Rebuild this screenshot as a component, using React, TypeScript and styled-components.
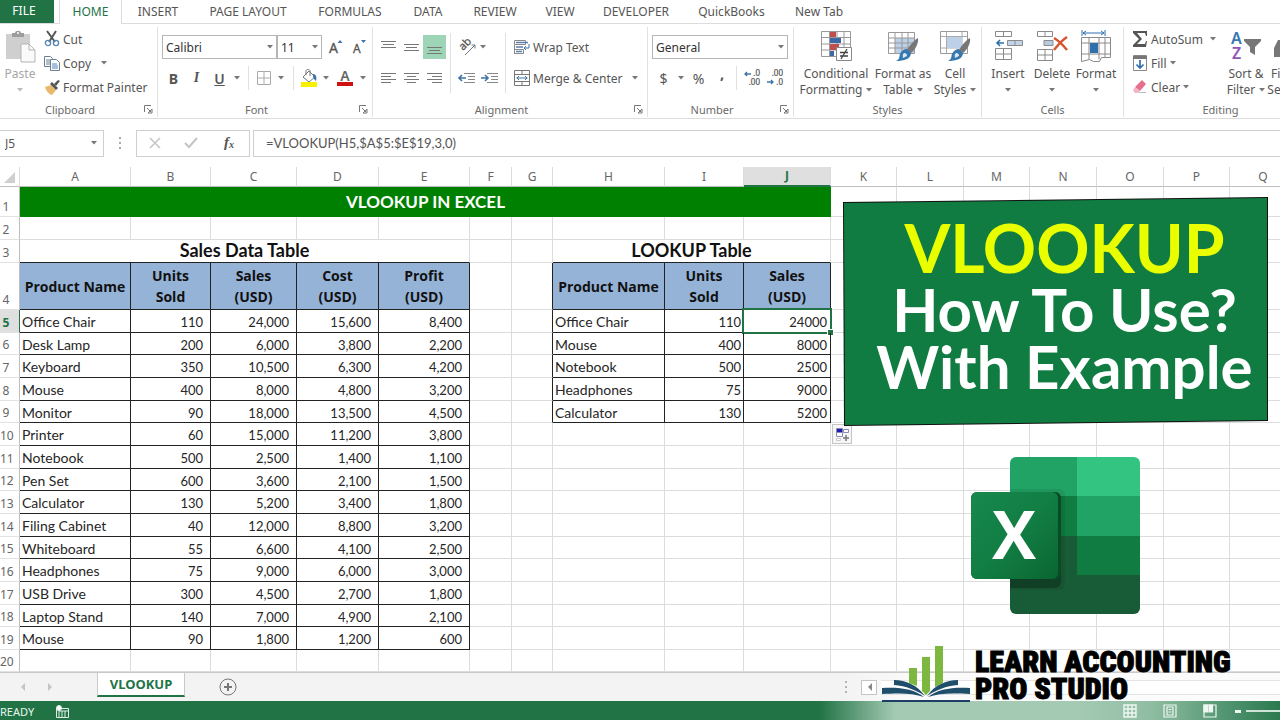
import React from 'react';
import styled, { createGlobalStyle } from 'styled-components';

const UI_FONT = '"Noto Sans", "Open Sans", sans-serif';
const CELL_FONT = 'Lato, "Open Sans", sans-serif';
const GREEN = '#217346';
const INK = '#555';

const Global = createGlobalStyle`
  * { box-sizing: border-box; }
  body { margin: 0; background: #fff; font-family: ${UI_FONT}; font-size: 12px; color: ${INK}; overflow: hidden; }
  button, input, select { font: inherit; color: inherit; }
  svg { display: block; flex: none; overflow: visible; }
`;

const Page = styled.div`
  position: relative;
  display: flex;
  flex-direction: column;
  min-height: 100vh;
  overflow: hidden;
`;

/* ---------- ribbon tabs ---------- */
const TabStrip = styled.nav`
  display: flex;
  height: 24px;
  border-bottom: 1px solid #dcdcdc;
`;
const FileTab = styled.button`
  width: 54px;
  height: 23px;
  padding: 0 6px 2px 0;
  border: 0;
  background: ${GREEN};
  color: #fff;
  margin-right: 5px;
`;
const RibbonTab = styled.button<{ $w: number; $active?: boolean }>`
  width: ${p => p.$w}px;
  height: 24px;
  padding: 0 0 2px;
  white-space: nowrap;
  border: solid #dcdcdc;
  border-width: ${p => (p.$active ? '0 1px' : '0')};
  background: ${p => (p.$active ? '#fff' : 'transparent')};
  color: ${p => (p.$active ? GREEN : INK)};
`;

/* ---------- ribbon body ---------- */
const Ribbon = styled.div`
  display: flex;
  height: 95px;
  border-bottom: 1px solid #dcdcdc;
  overflow: hidden;
`;
const Group = styled.section<{ $w: number }>`
  flex: none;
  display: flex;
  flex-direction: column;
  width: ${p => p.$w}px;
  padding-left: 4px;
  margin: 3px 0 1px;
  border-right: 1px solid #e2e2e2;
`;
const GroupBody = styled.div`
  flex: 1;
  display: flex;
  align-items: flex-start;
`;
const GroupFoot = styled.footer`
  display: flex;
  align-items: center;
  height: 16px;
  padding-right: 4px;
  font-size: 11px;
  color: #6a6a6a;
`;
const FootLabel = styled.span<{ $pad: number }>`
  flex: 1;
  padding-right: ${p => p.$pad}px;
  text-align: center;
`;
const Bare = styled.button`
  display: flex;
  padding: 0;
  border: 0;
  background: none;
`;
const Stack = styled.div`
  display: flex;
  flex-direction: column;
  gap: 7px;
  padding-top: 8px;
`;
const Line = styled.div`
  display: flex;
  align-items: center;
  height: 24px;
`;
const Indented = styled(Line)`
  padding-left: 4px;
`;
const Tool = styled.button<{ $w: number; $on?: boolean }>`
  display: flex;
  align-items: center;
  justify-content: center;
  width: ${p => p.$w}px;
  height: 24px;
  padding: 0;
  border: 0;
  background: ${p => (p.$on ? '#9fd5b7' : 'none')};
  font-size: 14px;
`;
const TextTool = styled.button`
  display: flex;
  align-items: center;
  gap: 3px;
  height: 24px;
  padding: 0;
  border: 0;
  background: none;
  white-space: nowrap;
`;
const Italic = styled.i`
  font-family: "Liberation Serif", serif;
  font-weight: bold;
`;
const Under = styled.u`
  font-weight: 600;
`;
const EditList = styled.div`
  width: 96px;
  padding-left: 4px;
`;
const ClipList = styled.div`
  padding-left: 8px;
`;
const BigTool = styled.button<{ $w: number; $dim?: boolean }>`
  display: flex;
  flex-direction: column;
  align-items: center;
  width: ${p => p.$w}px;
  padding: 3px 0 0;
  border: 0;
  background: none;
  line-height: 16px;
  white-space: nowrap;
  color: ${p => (p.$dim ? '#a6a6a6' : INK)};
`;
const BigLabel = styled.span`
  display: flex;
  flex-direction: column;
  align-items: center;
  margin-top: 4px;
`;
const LabelRow = styled.span`
  display: flex;
  align-items: center;
  gap: 4px;
  min-height: 16px;
`;
const Divider = styled.span<{ $h: number; $m: number }>`
  width: 1px;
  height: ${p => p.$h}px;
  margin: 0 ${p => p.$m}px;
  background: #e0e0e0;
`;
const DividerTall = styled(Divider)`
  margin-top: 6px;
`;
const PickWrap = styled.label<{ $w: number }>`
  position: relative;
  display: block;
  width: ${p => p.$w}px;
  height: 24px;
`;
const Pick = styled.select`
  appearance: none;
  width: 100%;
  height: 24px;
  padding: 0 4px 0 3px;
  border: 1px solid #b5b5b5;
  border-radius: 0;
  background: #fff;
  color: #333;
`;
const PickArrow = styled.span`
  position: absolute;
  right: 4px;
  top: 10px;
  pointer-events: none;
`;

/* ---------- formula bar ---------- */
const FormulaBar = styled.div`
  display: flex;
  align-items: center;
  height: 48px;
`;
const NameBox = styled.div`
  display: flex;
  align-items: center;
  width: 104px;
  height: 27px;
  padding-right: 6px;
  border: 1px solid #cfcfcf;
  border-left: 0;
`;
const NameInput = styled.input`
  flex: 1;
  min-width: 0;
  padding: 0 0 0 5px;
  border: 0;
  outline: 0;
`;
const Dots = styled.span`
  width: 32px;
  display: flex;
  justify-content: center;
`;
const FxBox = styled.div`
  display: flex;
  align-items: center;
  justify-content: space-around;
  width: 114px;
  height: 27px;
  border: 1px solid #cfcfcf;
`;
const FormulaInput = styled.input`
  flex: 1;
  min-width: 0;
  height: 27px;
  margin-left: 3px;
  padding: 0 12px;
  border: 1px solid #cfcfcf;
  border-right: 0;
  outline: 0;
  font-family: ${CELL_FONT};
  font-size: 13px;
`;

/* ---------- sheet ---------- */
const SheetArea = styled.main`
  flex: 1;
  overflow: hidden;
`;
const Sheet = styled.table`
  width: 100%;
  min-width: 1297px;
  table-layout: fixed;
  border-collapse: separate;
  border-spacing: 0;
  font-family: ${CELL_FONT};
  font-size: 14px;
  color: #262626;
`;
const Col = styled.col<{ $w: number }>`
  width: ${p => p.$w}px;
`;
const Row = styled.tr<{ $h: number }>`
  height: ${p => p.$h}px;
`;
const ColHead = styled.th<{ $on?: boolean }>`
  padding: 0;
  font: ${p => (p.$on ? 'bold' : 'normal')} 12px/18px ${UI_FONT};
  color: ${p => (p.$on ? GREEN : '#666')};
  background: ${p => (p.$on ? '#dfdfdf' : '#fff')};
  border-right: 1px solid #dadada;
  border-bottom: ${p => (p.$on ? `2px solid ${GREEN}` : '1px solid #bdbdbd')};
`;
const Corner = styled(ColHead)`
  vertical-align: bottom;
`;
const RowHead = styled.th<{ $on?: boolean }>`
  padding: 0 7px 0 0;
  vertical-align: bottom;
  text-align: center;
  white-space: nowrap;
  font: ${p => (p.$on ? 'bold' : 'normal')} 12px/18px ${UI_FONT};
  color: ${p => (p.$on ? GREEN : '#666')};
  background: ${p => (p.$on ? '#dfdfdf' : '#fff')};
  border-right: 1px solid ${p => (p.$on ? GREEN : '#bdbdbd')};
  border-bottom: 1px solid #e2e2e2;
`;
const Cell = styled.td<{ $r?: string; $b?: string }>`
  padding: 0;
  line-height: 18px;
  border-right: 1px solid ${p => p.$r ?? '#dcdcdc'};
  border-bottom: 1px solid ${p => p.$b ?? '#dcdcdc'};
`;
const NameCell = styled(Cell)`
  padding: 2px 0 0 2px;
`;
const NumCell = styled(Cell)<{ $pad: number }>`
  position: relative;
  padding: 2px ${p => p.$pad}px 0 0;
  text-align: right;
  font-size: 13px;
`;
const Title = styled.td`
  padding: 0;
  background: #008000;
  color: #fff;
  text-align: center;
  font-size: 17px;
  font-weight: bold;
  line-height: 24px;
`;
const Caption = styled(Cell)`
  text-align: center;
  vertical-align: top;
  font-size: 18px;
  font-weight: bold;
  line-height: 20px;
  color: #111;
`;
const Heading = styled.th`
  padding: 0;
  background: #95b3d7;
  color: #111;
  font-family: "Open Sans", sans-serif;
  font-size: 14px;
  font-weight: bold;
  line-height: 21px;
  white-space: nowrap;
  border-right: 1px solid #222;
  border-bottom: 1px solid #222;
`;
const Selection = styled.span`
  position: absolute;
  inset: -2px;
  border: 2px solid ${GREEN};
  &::after {
    content: '';
    position: absolute;
    right: -3px;
    bottom: -3px;
    width: 5px;
    height: 5px;
    background: ${GREEN};
    outline: 1px solid #fff;
  }
`;
const FillOptions = styled.button`
  display: flex;
  width: 20px;
  height: 20px;
  margin-left: 1px;
  padding: 2px;
  border: 1px solid #c4c4c4;
  background: #f6f6f6;
`;

/* ---------- bottom bars ---------- */
const SheetTabs = styled.div`
  display: flex;
  align-items: center;
  height: 29px;
  border-top: 1px solid #c9c9c9;
  background: linear-gradient(to right, #f3f3f3 66%, #fbfbfb 72%);
`;
const TabNav = styled.div`
  display: flex;
  align-items: center;
  gap: 23px;
  width: 97px;
  padding-left: 20px;
`;
const SheetTab = styled.button`
  align-self: flex-start;
  width: 88px;
  height: 24px;
  padding: 0;
  border: solid #c9c9c9;
  border-width: 0 1px;
  border-bottom: 2px solid ${GREEN};
  background: #fff;
  color: ${GREEN};
  font-weight: bold;
  font-size: 13px;
`;
const AddTab = styled(Bare)`
  margin-left: 34px;
`;
const ScrollZone = styled.div`
  display: flex;
  align-items: center;
  flex: 0 0 436px;
  margin-left: auto;
`;
const ScrollLeft = styled.button`
  display: flex;
  align-items: center;
  justify-content: center;
  width: 16px;
  height: 15px;
  margin: 0 4px 0 14px;
  padding: 0;
  border: 1px solid #c4c4c4;
  background: #fff;
`;
const ScrollThumb = styled.span`
  flex: 1;
  height: 15px;
  border: solid #e4e4e4;
  border-width: 1px 0;
  background: #fff;
`;
const StatusBar = styled.footer`
  display: flex;
  align-items: center;
  height: 20px;
  color: #e8f3ec;
  font-size: 11px;
  background: linear-gradient(to right, ${GREEN} 64%, #a5cab4 70%, #a5cab4 84%, #8fbda2 90%, #4f9370 96%, #2b7a4e);
`;
const Ready = styled.span`
  width: 56px;
`;
const Views = styled.div`
  display: flex;
  align-items: center;
  margin-left: auto;
`;
const ViewButton = styled(Bare)`
  width: 40px;
  justify-content: center;
`;
const Zoom = styled.input`
  appearance: none;
  width: 34px;
  height: 2px;
  margin: 0;
  background: #cfe4d7;
  &::-webkit-slider-thumb { appearance: none; width: 0; height: 0; }
`;

/* ---------- overlays ---------- */
const Banner = styled.aside`
  position: absolute;
  left: 843px;
  top: 197px;
  width: 425px;
  height: 229px;
  padding: 17px 0 0 18px;
  background: #111;
  clip-path: polygon(0 5px, 100% 0, 100% 224px, 1px 100%);
  font-family: ${CELL_FONT};
  font-weight: bold;
  text-align: center;
  white-space: nowrap;
  color: #fff;
  &::before {
    content: '';
    position: absolute;
    inset: 1px;
    background: #107c41;
    clip-path: polygon(0 5px, 100% 0, 100% 222px, 1px 100%);
  }
`;
const BannerTop = styled.div`
  position: relative;
  font-size: 66px;
  line-height: 67px;
  color: #e9ff00;
`;
const BannerLine = styled.div`
  position: relative;
  font-size: 60px;
  line-height: 57px;
`;
const ExcelMark = styled.div`
  position: absolute;
  left: 970px;
  top: 457px;
`;
const Brand = styled.div`
  position: absolute;
  left: 882px;
  bottom: 19px;
  display: flex;
  align-items: flex-end;
  gap: 5px;
`;
const BrandName = styled.div`
  font: 900 30px/27px "Roboto Condensed", Roboto, sans-serif;
  color: #000;
  -webkit-text-stroke: 1px #000;
  white-space: pre;
`;

/* ---------- small drawings ---------- */
const Caret = ({ c = '#777' }: { c?: string }) => (
  <svg width="6" height="4" viewBox="0 0 6 4"><path d="M0 0h6L3 3.5z" fill={c} /></svg>
);
const Launcher = () => (
  <Bare aria-label="More options">
    <svg width="9" height="9" viewBox="0 0 9 9" fill="none" stroke="#777"><path d="M.5 7V.5H7M3 3l4 4M8 4v4H4z" /></svg>
  </Bare>
);
const Bars = ({ rows, dy = 0 }: { rows: [number, number][]; dy?: number }) => (
  <svg width="16" height="16" viewBox="0 0 16 16" stroke="#777">
    {rows.map(([a, b], i) => <path key={i} d={`M${a} ${dy + 0.5 + i * 3}H${b}`} />)}
  </svg>
);
const PasteIcon = () => (
  <svg width="32" height="32" viewBox="0 0 32 32">
    <path d="M2 4h24v25H2z" fill="#cfcfcf" /><path d="M8 7V3h3c0-3 6-3 6 0h3v4z" fill="#9d9d9d" /><circle cx="14" cy="3" r="1" fill="#fff" />
    <path d="M17 14h8l6 6v12H17z" fill="#fafafa" stroke="#b4b4b4" /><path d="M25 14v6h6" fill="none" stroke="#b4b4b4" />
  </svg>
);
const CutIcon = () => (
  <svg width="16" height="16" viewBox="0 0 16 16" fill="none">
    <path d="M3 0l8 11M12 0L5 11" stroke="#555" strokeWidth="2" />
    <circle cx="4" cy="12" r="2.6" stroke="#5b8ab5" strokeWidth="1.4" /><circle cx="12" cy="12" r="2.6" stroke="#5b8ab5" strokeWidth="1.4" />
  </svg>
);
const CopyIcon = () => (
  <svg width="16" height="16" viewBox="0 0 16 16" fill="#fff" stroke="#6b7f94">
    <path d="M.5 1.500h6l2 2v8h-8zM2 5h4M2 7h4M2 9h4" /><path d="M6.500 4.500h6l3 3v8h-9z" /><path d="M8 9h5M8 11h6M8 13h6" stroke="#4a80b5" />
  </svg>
);
const PainterIcon = () => (
  <svg width="16" height="16" viewBox="0 0 16 16">
    <path d="M1 8l6-2 5 5-4 5c-2-1-3-1-4-3-1 0-2-2-3-5z" fill="#e8b96a" /><path d="M6 5l2-2 6 6-2 2z" fill="#555" /><path d="M10 5l4-4 2 1-4 5z" fill="#555" />
  </svg>
);
const BordersIcon = () => (
  <svg width="14" height="14" viewBox="0 0 14 14" fill="none" stroke="#aaa"><path d="M.5.5h13v13H.5zM7 1v12M1 7h12" /></svg>
);
const FillIcon = () => (
  <svg width="18" height="18" viewBox="0 0 18 18">
    <path d="M1 13h16v5H1z" fill="#f7f000" /><path d="M9 2l6 6-6 5-6-5z" fill="#fff" stroke="#777" /><path d="M6 6V2c0-2 4-2 4 0v5" fill="none" stroke="#777" /><path d="M13 5c3 0 4 3 3 7-2-1-2-3-3-4z" fill="#3f74a8" />
  </svg>
);
const FontColorIcon = () => (
  <svg width="18" height="18" viewBox="0 0 18 18">
    <text x="9" y="12" textAnchor="middle" fontFamily="Noto Sans" fontSize="14" fontWeight="600" fill="#666">A</text><path d="M1 13h16v4H1z" fill="#d11010" />
  </svg>
);
const GrowFont = ({ down }: { down?: boolean }) => (
  <svg width="16" height="18" viewBox="0 0 16 18">
    <text x="1" y="15" fontFamily="Noto Sans" fontSize={down ? 12 : 14} fill="#555" stroke="#555" strokeWidth=".3">A</text>
    <path d={down ? 'M9 2h5l-2.500 3z' : 'M9.500 5h5L12 2z'} fill="#3f74a8" />
  </svg>
);
const OrientIcon = () => (
  <svg width="18" height="18" viewBox="0 0 18 18">
    <text transform="translate(5 13) rotate(-45)" fontFamily="Noto Sans" fontSize="11" fill="#555" stroke="#555" strokeWidth=".3">ab</text>
    <path d="M7 17L17 7M13.500 7H17v3.500" fill="none" stroke="#777" />
  </svg>
);
const IndentIcon = ({ right }: { right?: boolean }) => (
  <svg width="17" height="13" viewBox="0 0 17 13" fill="none">
    <path d="M6 1.500h11M10 4.500h7M10 7.500h7M6 10.500h11" stroke="#888" />
    <path d={right ? 'M0 6h7M4 3l3 3-3 3' : 'M1 6h7M4 3L1 6l3 3'} stroke="#3f74a8" strokeWidth="1.600" />
  </svg>
);
const CommaIcon = () => (
  <svg width="6" height="12" viewBox="0 0 6 12"><text x="1" y="7" fontFamily="Noto Sans" fontSize="15" fontWeight="bold" fill="#555">,</text></svg>
);
const WrapIcon = () => (
  <svg width="16" height="16" viewBox="0 0 16 16" fill="none">
    <path d="M.5 1.500h11v4H.5zM.5 6v9M.5 10.500h9v4h-9" stroke="#888" /><path d="M2 3.500h12M2 8h7M2 12.500h6" stroke="#5b7fae" strokeWidth="1.500" /><path d="M15 5v4h-5M12 7l-2 2 2 2" stroke="#3f74a8" />
  </svg>
);
const MergeIcon = () => (
  <svg width="16" height="16" viewBox="0 0 16 16" fill="none">
    <path d="M.5.5h15v15H.5zM.5 4.500h15M.5 11.500h15M8 .5v4M8 11.500v4" stroke="#777" /><path d="M2.500 8h11M5 6L3 8l2 2M11 6l2 2-2 2" stroke="#3f74a8" />
  </svg>
);
const DecimalIcon = ({ less }: { less?: boolean }) => (
  <svg width="18" height="16" viewBox="0 0 18 16" fontFamily="Noto Sans" fontSize="8" fill="#555" stroke="#555" strokeWidth=".2">
    <text x="17" y="6" textAnchor="end">{less ? '.00' : '.0'}</text><text x="17" y="15" textAnchor="end">{less ? '.0' : '.00'}</text>
    <path d={less ? 'M1 12h6M5 10l2 2-2 2' : 'M2 4h6M4 2L2 4l2 2'} fill="none" stroke="#3f74a8" strokeWidth="1.300" />
  </svg>
);
const CondIcon = () => (
  <svg width="32" height="32" viewBox="0 0 32 32">
    <path d="M1.500 1.500h29v25h-29z" fill="#fff" stroke="#999" /><path d="M2 7.500h28M2 14h28M2 20h28M9.500 2v24M17 2v24M24 2v24" stroke="#999" />
    <path d="M10 2h6v5h-6zM10 14h9v6h-9z" fill="#c0504d" /><path d="M10 8h11v5H10zM10 21h4v5h-4z" fill="#3d6aa6" />
    <path d="M16.500 17.500h15v13h-15z" fill="#fff" stroke="#888" /><path d="M20 22.500h8M20 26h8M27 19l-6 10" stroke="#444" strokeWidth="1.300" />
  </svg>
);
const Brush = () => (
  <>
    <path d="M31 8c-3 1-9 8-11 12l4 3c4-3 8-10 7-15z" fill="#777" />
    <path d="M20 19l4 4c0 6-7 8-15 8 4-2 3-4 4-7 1-3 4-5 7-5z" fill="#3778b0" /><path d="M17 23c2 0 3 1 3 3l-4 2c0-2-1-3 1-5z" fill="#dce9f5" />
  </>
);
const TableIcon = () => (
  <svg width="32" height="32" viewBox="0 0 32 32">
    <path d="M1.500 2.500h26v21h-26z" fill="#fff" stroke="#999" /><path d="M8 8h19v15H8z" fill="#bcd0e8" /><path d="M2 8h25M2 13h25M2 18h25M8 3v20M15 3v20M21 3v20" stroke="#999" /><Brush />
  </svg>
);
const StylesIcon = () => (
  <svg width="32" height="32" viewBox="0 0 32 32">
    <path d="M1.500 1.500h27v22h-27z" fill="#fff" stroke="#999" /><path d="M2 6.500h26M2 18h26M7.500 2v21M23 2v21" stroke="#aaa" /><path d="M8 7h15v11H8z" fill="#bcd0e8" /><Brush />
  </svg>
);
const InsertIcon = () => (
  <svg width="32" height="32" viewBox="0 0 32 32" fill="#fff" stroke="#8a8a8a">
    <path d="M3.500 1.500h16v5h-16zM11.500 1.500v5M3.500 18.500h16v11h-16zM11.500 18.500v11M3.500 24h16" /><path d="M15.500 10.500h15v5h-15zM23 10.500v5" fill="#c3d3e8" /><path d="M12 13H5M8 10l-3 3 3 3" fill="none" stroke="#2f6fae" strokeWidth="1.600" />
  </svg>
);
const DeleteIcon = () => (
  <svg width="32" height="32" viewBox="0 0 32 32" fill="#fff" stroke="#8a8a8a">
    <path d="M1.500 1.500h15v5h-15zM9 1.500v5M1.500 19.500h15v11h-15zM9 19.500v11M1.500 25h15" /><path d="M8 10.500h9v5H8z" fill="#b9cbe3" /><path d="M18 8c5 3 9 7 13 12M31 7c-6 4-9 8-13 13" fill="none" stroke="#d9532c" strokeWidth="2.400" />
  </svg>
);
const FormatIcon = () => (
  <svg width="32" height="32" viewBox="0 0 32 32" fill="#fff" stroke="#8a8a8a">
    <path d="M1.500 7.500h29v20l-9 0-2 4h-6l-4-2-8 2zM1.500 13h29M1.500 24h29M9 7.500v22M19 7.500v22M25 7.500v20" /><path d="M10 13h8v10h-8z" fill="#2f6fae" stroke="none" /><path d="M2 0v6M25 0v6M3 3h21M6 1L3 3l3 2M21 1l3 2-3 2" fill="none" stroke="#2f6fae" />
  </svg>
);
const SumIcon = () => (
  <svg width="16" height="16" viewBox="0 0 16 16"><path d="M1 0h14v5h-1l-1-3H5l5 6-5 5h8l1-3h1l-1 6H1v-2l6-6-6-6z" fill="#555" /></svg>
);
const FillDownIcon = () => (
  <svg width="16" height="16" viewBox="0 0 16 16" fill="none"><path d="M1.500.5h13v15h-13z" fill="#fff" stroke="#888" /><path d="M1 1h14v3H1z" fill="#777" /><path d="M8 5v8M4.500 9.500L8 13l3.500-3.500" stroke="#2f6fae" strokeWidth="1.700" /></svg>
);
const ClearIcon = () => (
  <svg width="16" height="16" viewBox="0 0 16 16"><path d="M3 8l7-7 4 4-6 7z" fill="#e4708f" /><path d="M3 8l5 4-2 2H3l-2-3z" fill="#f3b3c3" /><path d="M7 13.500h7" stroke="#bbb" /></svg>
);
const SortIcon = () => (
  <svg width="32" height="32" viewBox="0 0 32 32">
    <text x="1" y="14" fontFamily="Noto Sans" fontSize="16" fontWeight="600" fill="#3778b0">A</text><text x="2" y="29" fontFamily="Noto Sans" fontSize="16" fontWeight="600" fill="#9055b5">Z</text>
    <path d="M14 9h17v2l-6 6v8l-5-3v-5l-6-6z" fill="#777" />
  </svg>
);
const FindIcon = () => (
  <svg width="32" height="32" viewBox="0 0 32 32" fill="#777"><path d="M1 18l4-8h7l2 4h4l2-4h7l4 8v9H19v-7h-6v7H1z" /></svg>
);
const ExcelLogo = () => (
  <svg width="171" height="158" viewBox="0 0 171 158" role="img" aria-label="Excel">
    <defs>
      <clipPath id="book"><rect x="40" y="0" width="130" height="157" rx="6" /></clipPath>
      <linearGradient id="face" x1="0" y1="0" x2="1" y2="1"><stop offset="0" stopColor="#18884f" /><stop offset=".5" stopColor="#117e43" /><stop offset="1" stopColor="#0b6631" /></linearGradient>
    </defs>
    <g clipPath="url(#book)">
      <path d="M40 0h67v39H40z" fill="#21a366" /><path d="M107 0h63v39h-63z" fill="#33c481" /><path d="M40 39h67v40H40z" fill="#107c41" /><path d="M107 39h63v40h-63z" fill="#21a366" />
      <path d="M40 79h130v78H40z" fill="#185c37" /><path d="M107 79h63v39h-63z" fill="#107c41" />
      <rect x="20" y="32" width="75" height="101" rx="6" opacity=".08" />
      <rect x="20" y="35" width="71" height="96" rx="6" opacity=".25" />
    </g>
    <rect x="1" y="35" width="90" height="87" rx="6" fill="#0b4a27" />
    <rect x="1" y="35" width="87" height="87" rx="6" fill="url(#face)" />
    <text x="44" y="102" textAnchor="middle" fontFamily="Open Sans" fontSize="66" fontWeight="bold" fill="#fff">X</text>
  </svg>
);
const BookLogo = () => (
  <svg width="88" height="56" viewBox="0 0 88 56">
    <path d="M27 22h8v18l-8-3zM40 11h8v34l-4 4-4-4zM53 0h8v37l-8 4z" fill="#7cb83f" />
    <path d="M12 34c12 0 23 5 31 16-9-6-19-10-31-11zM76 34c-12 0-23 5-31 16 9-6 19-10 31-11z" fill="#1f4e6b" />
    <path d="M0 42c18-1 32 1 42 9-11-4-24-4-42-3zM88 42c-18-1-32 1-42 9 11-4 24-4 42-3z" fill="#1f4e6b" />
    <path d="M0 55h88" stroke="#1f3e66" strokeWidth="2" />
  </svg>
);

/* ---------- data ---------- */
const tabs: [string, number][] = [['INSERT', 72], ['PAGE LAYOUT', 108], ['FORMULAS', 96], ['DATA', 60], ['REVIEW', 74], ['VIEW', 56], ['DEVELOPER', 96], ['QuickBooks', 95], ['New Tab', 80]];
const columns: [string, number][] = [['A', 111], ['B', 80], ['C', 86], ['D', 82], ['E', 91], ['F', 42], ['G', 41], ['H', 112], ['I', 79], ['J', 87], ['K', 66], ['L', 67], ['M', 66], ['N', 67], ['O', 67], ['P', 66]];
const sales: string[][] = [
  ['Office Chair', '110', '24,000', '15,600', '8,400'],
  ['Desk Lamp', '200', '6,000', '3,800', '2,200'],
  ['Keyboard', '350', '10,500', '6,300', '4,200'],
  ['Mouse', '400', '8,000', '4,800', '3,200'],
  ['Monitor', '90', '18,000', '13,500', '4,500'],
  ['Printer', '60', '15,000', '11,200', '3,800'],
  ['Notebook', '500', '2,500', '1,400', '1,100'],
  ['Pen Set', '600', '3,600', '2,100', '1,500'],
  ['Calculator', '130', '5,200', '3,400', '1,800'],
  ['Filing Cabinet', '40', '12,000', '8,800', '3,200'],
  ['Whiteboard', '55', '6,600', '4,100', '2,500'],
  ['Headphones', '75', '9,000', '6,000', '3,000'],
  ['USB Drive', '300', '4,500', '2,700', '1,800'],
  ['Laptop Stand', '140', '7,000', '4,900', '2,100'],
  ['Mouse', '90', '1,800', '1,200', '600'],
];
const lookup: string[][] = [
  ['Office Chair', '110', '24000'],
  ['Mouse', '400', '8000'],
  ['Notebook', '500', '2500'],
  ['Headphones', '75', '9000'],
  ['Calculator', '130', '5200'],
];
const DARK = '#222';
const blanks = (n: number) => Array.from({ length: n }, (_, i) => <Cell key={`blank${i}`} />);

/* ---------- composed parts ---------- */
const Combo = ({ w, label, value }: { w: number; label: string; value: string }) => (
  <PickWrap $w={w}>
    <Pick aria-label={label} defaultValue={value}><option>{value}</option></Pick>
    <PickArrow><Caret /></PickArrow>
  </PickWrap>
);
const Drop = ({ w }: { w: number }) => <Tool $w={w} aria-label="Options"><Caret /></Tool>;
const Big = ({ w, icon, top, bottom, dim }: { w: number; icon: React.ReactNode; top: string; bottom?: string; dim?: boolean }) => (
  <BigTool $w={w} $dim={dim}>
    {icon}
    <BigLabel>
      <LabelRow>{top}</LabelRow>
      <LabelRow>{bottom}<Caret c={dim ? '#bbb' : '#777'} /></LabelRow>
    </BigLabel>
  </BigTool>
);
const Foot = ({ label, launch }: { label: string; launch?: boolean }) => (
  <GroupFoot><FootLabel $pad={launch ? 8 : 0}>{label}</FootLabel>{launch && <Launcher />}</GroupFoot>
);

const RibbonBody = () => (
  <Ribbon>
    <Group $w={158}>
      <GroupBody>
        <Big w={32} icon={<PasteIcon />} top="Paste" dim />
        <ClipList>
          <Line><TextTool><CutIcon />Cut</TextTool></Line>
          <Line><TextTool><CopyIcon />Copy</TextTool><Drop w={26} /></Line>
          <Line><TextTool><PainterIcon />Format Painter</TextTool></Line>
        </ClipList>
      </GroupBody>
      <Foot label="Clipboard" launch />
    </Group>
    <Group $w={215}>
      <GroupBody>
        <Stack>
          <Line>
            <Combo w={115} label="Font" value="Calibri" />
            <Combo w={45} label="Font size" value="11" />
            <Tool $w={28} aria-label="Increase font size"><GrowFont /></Tool>
            <Tool $w={20} aria-label="Decrease font size"><GrowFont down /></Tool>
          </Line>
          <Line>
            <Tool $w={23}><b>B</b></Tool>
            <Tool $w={23}><Italic>I</Italic></Tool>
            <Tool $w={23}><Under>U</Under></Tool>
            <Drop w={12} />
            <Divider $h={24} $m={5} />
            <Tool $w={20} aria-label="Borders"><BordersIcon /></Tool>
            <Drop w={14} />
            <Divider $h={24} $m={5} />
            <Tool $w={20} aria-label="Fill color"><FillIcon /></Tool>
            <Drop w={14} />
            <Tool $w={24} aria-label="Font color"><FontColorIcon /></Tool>
            <Drop w={12} />
          </Line>
        </Stack>
      </GroupBody>
      <Foot label="Font" launch />
    </Group>
    <Group $w={275}>
      <GroupBody>
        <Stack>
          <Line>
            <Tool $w={23} aria-label="Top align"><Bars dy={2} rows={[[0, 15], [2, 13], [0, 15]]} /></Tool>
            <Tool $w={23} aria-label="Middle align"><Bars dy={5} rows={[[0, 15], [2, 13], [0, 15]]} /></Tool>
            <Tool $w={23} $on aria-label="Bottom align"><Bars dy={8} rows={[[0, 15], [2, 13], [0, 15]]} /></Tool>
          </Line>
          <Line>
            <Tool $w={23} aria-label="Align left"><Bars dy={3} rows={[[0, 15], [0, 10], [0, 15], [0, 10]]} /></Tool>
            <Tool $w={23} aria-label="Center"><Bars dy={3} rows={[[0, 15], [3, 12], [0, 15], [3, 12]]} /></Tool>
            <Tool $w={23} aria-label="Align right"><Bars dy={3} rows={[[0, 15], [5, 15], [0, 15], [5, 15]]} /></Tool>
          </Line>
        </Stack>
        <DividerTall $m={4} $h={60} />
        <Stack>
          <Line>
            <Tool $w={23} aria-label="Orientation"><OrientIcon /></Tool>
            <Drop w={10} />
          </Line>
          <Line>
            <Tool $w={23} aria-label="Decrease indent"><IndentIcon /></Tool>
            <Tool $w={23} aria-label="Increase indent"><IndentIcon right /></Tool>
          </Line>
        </Stack>
        <DividerTall $m={4} $h={60} />
        <Stack>
          <Indented><TextTool><WrapIcon />Wrap Text</TextTool></Indented>
          <Indented><TextTool><MergeIcon />Merge &amp; Center</TextTool><Drop w={24} /></Indented>
        </Stack>
      </GroupBody>
      <Foot label="Alignment" launch />
    </Group>
    <Group $w={146}>
      <GroupBody>
        <Stack>
          <Line><Combo w={136} label="Number format" value="General" /></Line>
          <Line>
            <Tool $w={23}>$</Tool>
            <Drop w={12} />
            <Tool $w={23}>%</Tool>
            <Tool $w={23} aria-label="Comma style"><CommaIcon /></Tool>
            <Divider $h={24} $m={3} />
            <Tool $w={23} aria-label="Increase decimal"><DecimalIcon /></Tool>
            <Tool $w={23} aria-label="Decrease decimal"><DecimalIcon less /></Tool>
          </Line>
        </Stack>
      </GroupBody>
      <Foot label="Number" launch />
    </Group>
    <Group $w={188}>
      <GroupBody>
        <Big w={76} icon={<CondIcon />} top="Conditional" bottom="Formatting" />
        <Big w={58} icon={<TableIcon />} top="Format as" bottom="Table" />
        <Big w={46} icon={<StylesIcon />} top="Cell" bottom="Styles" />
      </GroupBody>
      <Foot label="Styles" />
    </Group>
    <Group $w={142}>
      <GroupBody>
        <Big w={44} icon={<InsertIcon />} top="Insert" />
        <Big w={44} icon={<DeleteIcon />} top="Delete" />
        <Big w={44} icon={<FormatIcon />} top="Format" />
      </GroupBody>
      <Foot label="Cells" />
    </Group>
    <Group $w={194}>
      <GroupBody>
        <EditList>
          <Line><TextTool><SumIcon />AutoSum</TextTool><Drop w={26} /></Line>
          <Line><TextTool><FillDownIcon />Fill</TextTool><Drop w={12} /></Line>
          <Line><TextTool><ClearIcon />Clear</TextTool><Drop w={12} /></Line>
        </EditList>
        <Big w={44} icon={<SortIcon />} top="Sort &amp;" bottom="Filter" />
        <Big w={42} icon={<FindIcon />} top="Find &amp;" bottom="Select" />
      </GroupBody>
      <Foot label="Editing" />
    </Group>
  </Ribbon>
);

const HeadingPair = ({ a, b }: { a: string; b: string }) => <Heading>{a}<br />{b}</Heading>;

const Grid = () => (
  <Sheet>
    <colgroup>
      <Col $w={20} />
      {columns.map(([n, w]) => <Col key={n} $w={w} />)}
      <col />
    </colgroup>
    <thead>
      <Row $h={20}>
        <Corner aria-label="Select all"><svg width="19" height="18" viewBox="0 0 19 18"><path d="M15 4v11H4z" fill="#cfcfcf" /></svg></Corner>
        {columns.map(([n]) => <ColHead key={n} $on={n === 'J'}>{n}</ColHead>)}
        <ColHead>Q</ColHead>
      </Row>
    </thead>
    <tbody>
      <Row $h={30}><RowHead>1</RowHead><Title colSpan={10}>VLOOKUP IN EXCEL</Title>{blanks(7)}</Row>
      <Row $h={23}><RowHead>2</RowHead>{blanks(17)}</Row>
      <Row $h={23}>
        <RowHead>3</RowHead><Caption colSpan={5} $b={DARK}>Sales Data Table</Caption>{blanks(2)}<Caption colSpan={3} $b={DARK}>LOOKUP Table</Caption>{blanks(7)}
      </Row>
      <Row $h={47}>
        <RowHead>4</RowHead>
        <Heading>Product Name</Heading><HeadingPair a="Units" b="Sold" /><HeadingPair a="Sales" b="(USD)" /><HeadingPair a="Cost" b="(USD)" /><HeadingPair a="Profit" b="(USD)" />
        <Cell /><Cell $r={DARK} />
        <Heading>Product Name</Heading><HeadingPair a="Units" b="Sold" /><HeadingPair a="Sales" b="(USD)" />
        {blanks(7)}
      </Row>
      {sales.map((s, i) => {
        const l = lookup[i];
        return (
          <Row key={i} $h={i % 3 === 1 ? 22 : 23}>
            <RowHead $on={i === 0}>{i + 5}</RowHead>
            <NameCell $r={DARK} $b={DARK}>{s[0]}</NameCell>
            {s.slice(1).map((v, k) => <NumCell key={k} $pad={7} $r={DARK} $b={DARK}>{v}</NumCell>)}
            <Cell /><Cell $r={l ? DARK : undefined} />
            {l ? (
              <>
                <NameCell $r={DARK} $b={DARK}>{l[0]}</NameCell>
                <NumCell $pad={2} $r={DARK} $b={DARK}>{l[1]}</NumCell>
                <NumCell $pad={3} $r={DARK} $b={DARK}>{l[2]}{i === 0 && <Selection />}</NumCell>
              </>
            ) : blanks(3)}
            {i === 5 ? <><Cell><FillOptions aria-label="Auto fill options">
              <svg width="15" height="15" viewBox="0 0 15 15" fill="#fff" stroke="#8a8ab8"><path d="M1.500 1.500h6v4h-6z" fill="#1d1da8" /><path d="M1.500 5.500h6v4h-6zM8.500 2.500h5v3h-5z" /><path d="M8 11h6M11 8v6" stroke="#777" strokeWidth="1.500" /><path d="M1.500 11.500h4v2h-4z" stroke="#ccc" /></svg>
            </FillOptions></Cell>{blanks(6)}</> : blanks(7)}
          </Row>
        );
      })}
      <Row $h={22}><RowHead>20</RowHead>{blanks(17)}</Row>
    </tbody>
  </Sheet>
);

export default function App() {
  return (
    <Page>
      <Global />
      <TabStrip>
        <FileTab>FILE</FileTab>
        <RibbonTab $w={63} $active>HOME</RibbonTab>
        {tabs.map(([t, w]) => <RibbonTab key={t} $w={w}>{t}</RibbonTab>)}
      </TabStrip>
      <RibbonBody />
      <FormulaBar>
        <NameBox><NameInput aria-label="Name box" defaultValue="J5" /><Caret /></NameBox>
        <Dots><svg width="3" height="12" viewBox="0 0 3 12" fill="#aaa"><path d="M0 0h2v2H0zM0 5h2v2H0zM0 10h2v2H0z" /></svg></Dots>
        <FxBox>
          <Bare aria-label="Cancel"><svg width="12" height="12" viewBox="0 0 12 12" stroke="#c4c4c4" strokeWidth="1.500"><path d="M1 1l10 10M11 1L1 11" /></svg></Bare>
          <Bare aria-label="Enter"><svg width="14" height="12" viewBox="0 0 14 12" fill="none" stroke="#c4c4c4" strokeWidth="2"><path d="M1 6l4 4 8-9" /></svg></Bare>
          <Bare aria-label="Insert function"><svg width="16" height="18" viewBox="0 0 16 18" fontFamily="Liberation Serif" fontStyle="italic" fontWeight="bold" fill="#555"><text x="3" y="13" fontSize="15">f</text><text x="8" y="14" fontSize="10">x</text></svg></Bare>
        </FxBox>
        <FormulaInput aria-label="Formula" defaultValue="=VLOOKUP(H5,$A$5:$E$19,3,0)" />
      </FormulaBar>
      <SheetArea><Grid /></SheetArea>
      <SheetTabs>
        <TabNav>
          <Bare aria-label="Previous sheet"><svg width="5" height="8" viewBox="0 0 5 8"><path d="M5 0v8L1 4z" fill="#c4c4c4" /></svg></Bare>
          <Bare aria-label="Next sheet"><svg width="5" height="8" viewBox="0 0 5 8"><path d="M0 0v8l4-4z" fill="#c4c4c4" /></svg></Bare>
        </TabNav>
        <SheetTab>VLOOKUP</SheetTab>
        <AddTab aria-label="New sheet"><svg width="18" height="18" viewBox="0 0 18 18" fill="none" stroke="#777"><circle cx="9" cy="9" r="8" /><path d="M9 5v8M5 9h8" strokeWidth="2" /></svg></AddTab>
        <ScrollZone>
          <svg width="3" height="12" viewBox="0 0 3 12" fill="#b5b5b5"><path d="M1 0h2v2H1zM1 5h2v2H1zM1 10h2v2H1z" /></svg>
          <ScrollLeft aria-label="Scroll left"><svg width="5" height="8" viewBox="0 0 5 8"><path d="M5 0v8L1 4z" fill="#888" /></svg></ScrollLeft>
          <ScrollThumb />
        </ScrollZone>
      </SheetTabs>
      <StatusBar>
        <Ready>READY</Ready>
        <svg width="13" height="13" viewBox="0 0 13 13" fill="none" stroke="#e0efe6"><path d="M.5 3.500h12v9H.5zM3 6v6M6 6v6M9 6v6M3 6h9" /><circle cx="3" cy="3" r="2.500" fill="#fff" /></svg>
        <Views>
          <ViewButton aria-label="Normal view"><svg width="14" height="14" viewBox="0 0 14 14" fill="none" stroke="#eef7f1" strokeWidth="1.400"><path d="M1 1h12v12H1zM5 1v12M9 1v12M1 5h12M1 9h12" /></svg></ViewButton>
          <ViewButton aria-label="Page layout view"><svg width="14" height="14" viewBox="0 0 14 14" fill="none" stroke="#eef7f1" strokeWidth="1.200"><path d="M1 1h12v12H1zM4 3h6v8H4zM5.500 5.500h3M5.500 8h3" /></svg></ViewButton>
          <ViewButton aria-label="Page break view"><svg width="14" height="14" viewBox="0 0 14 14" fill="none" stroke="#eef7f1" strokeWidth="1.200"><path d="M1 1h12v12H1z" /><path d="M1 1h4v7H1zM6.500 1h3v7h-3z" fill="#eef7f1" /></svg></ViewButton>
          <Bare aria-label="Zoom out"><svg width="16" height="3" viewBox="0 0 16 3"><path d="M5 0h6v3H5z" fill="#eef7f1" /></svg></Bare>
          <Zoom type="range" aria-label="Zoom" />
        </Views>
      </StatusBar>
      <Banner>
        <BannerTop>VLOOKUP</BannerTop>
        <BannerLine>How To Use?</BannerLine>
        <BannerLine>With Example</BannerLine>
      </Banner>
      <ExcelMark><ExcelLogo /></ExcelMark>
      <Brand>
        <BookLogo />
        <BrandName>{'LEARN ACCOUNTING\nPRO STUDIO'}</BrandName>
      </Brand>
    </Page>
  );
}
